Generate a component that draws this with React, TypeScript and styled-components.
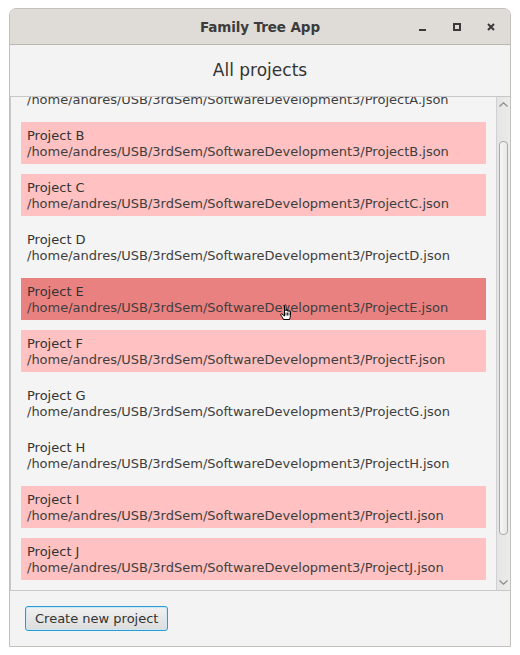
import { useEffect, useRef } from 'react';
import styled, { createGlobalStyle } from 'styled-components';

interface IProject {
  name: string;
  path: string;
  state: 'plain' | 'marked' | 'hover';
}

const base = '/home/andres/USB/3rdSem/SoftwareDevelopment3/';

const projects: IProject[] = [
  { name: 'Project A', path: base + 'ProjectA.json', state: 'plain' },
  { name: 'Project B', path: base + 'ProjectB.json', state: 'marked' },
  { name: 'Project C', path: base + 'ProjectC.json', state: 'marked' },
  { name: 'Project D', path: base + 'ProjectD.json', state: 'plain' },
  { name: 'Project E', path: base + 'ProjectE.json', state: 'hover' },
  { name: 'Project F', path: base + 'ProjectF.json', state: 'marked' },
  { name: 'Project G', path: base + 'ProjectG.json', state: 'plain' },
  { name: 'Project H', path: base + 'ProjectH.json', state: 'plain' },
  { name: 'Project I', path: base + 'ProjectI.json', state: 'marked' },
  { name: 'Project J', path: base + 'ProjectJ.json', state: 'marked' },
];

const App = () => {
  const viewRef = useRef<HTMLDivElement>(null);

  // list is scrolled all the way down
  useEffect(() => {
    if (viewRef.current) {
      viewRef.current.scrollTop = viewRef.current.scrollHeight;
    }
  }, []);

  return (
    <>
      <GlobalStyle />
      <Window>
        <TitleBar>
          <Title>Family Tree App</Title>
          <Controls>
            <Control aria-label='minimize'>
              <svg width='8' height='8' viewBox='0 0 8 8'>
                <rect x='0' y='6' width='7' height='2' fill='#3a3a3a' />
              </svg>
            </Control>
            <Control aria-label='maximize'>
              <svg width='8' height='8' viewBox='0 0 8 8'>
                <rect x='1' y='1' width='6' height='6' fill='none' stroke='#3a3a3a' strokeWidth='2' />
              </svg>
            </Control>
            <Control aria-label='close'>
              <svg width='8' height='8' viewBox='0 0 8 8'>
                <path d='M1 1 L7 7 M7 1 L1 7' stroke='#3a3a3a' strokeWidth='2' />
              </svg>
            </Control>
          </Controls>
        </TitleBar>

        <Content>
          <Heading>All projects</Heading>
          <ListFrame>
            <Viewport ref={viewRef}>
              {projects.map((p) => (
                <Item key={p.name} $state={p.state}>
                  <ItemName>{p.name}</ItemName>
                  <ItemPath>{p.path}</ItemPath>
                  {p.state === 'hover' && (
                    <Cursor width='14' height='17' viewBox='0 0 14 17'>
                      <path
                        d='M4.5 1.5 C4.5 0.7 6 0.7 6 1.5 V7 V6.2 C6 5.4 7.5 5.4 7.5 6.2 V7.2 V6.7 C7.5 5.9 9 5.9 9 6.7 V7.7 V7.4 C9 6.6 10.5 6.6 10.5 7.4 V11.5 C10.5 13 9.8 14.5 9.5 15.5 H3.5 C3 14 1.8 12.5 0.8 11 C0.3 10.2 1.2 9.3 2 10 L4.5 12 Z'
                        fill='#fff'
                        stroke='#000'
                        strokeWidth='1'
                        strokeLinejoin='round'
                      />
                      <path d='M6 8.5 V11.5 M7.5 8.5 V11.5 M9 8.5 V11.5' stroke='#000' strokeWidth='0.8' />
                    </Cursor>
                  )}
                </Item>
              ))}
            </Viewport>
            <ScrollBar>
              <Arrow viewBox='0 0 9 5' width='9' height='5'>
                <path d='M0.5 4.5 L4.5 0.8 L8.5 4.5' fill='none' stroke='#8a8a8a' strokeWidth='1.2' />
              </Arrow>
              <Track>
                <Thumb />
              </Track>
              <Arrow viewBox='0 0 9 5' width='9' height='5'>
                <path d='M0.5 0.5 L4.5 4.2 L8.5 0.5' fill='none' stroke='#8a8a8a' strokeWidth='1.2' />
              </Arrow>
            </ScrollBar>
          </ListFrame>
          <Footer>
            <Button type='button'>Create new project</Button>
          </Footer>
        </Content>
      </Window>
    </>
  );
};

export default App;

const GlobalStyle = createGlobalStyle`
  html, body {
    margin: 0;
    padding: 0;
    background: #ffffff;
  }
  body {
    font-family: 'DejaVu Sans', 'Liberation Sans', sans-serif;
    color: #333333;
  }
`;

const Window = styled.div`
  width: 502px;
  height: 639px;
  margin: 8px 0 0 9px;
  display: flex;
  flex-direction: column;
  border: 1px solid #c4c1bd;
  border-radius: 7px 7px 0 0;
  box-sizing: border-box;
  overflow: hidden;
  background: #f3f3f3;
`;

const TitleBar = styled.div`
  height: 36px;
  flex-shrink: 0;
  position: relative;
  display: flex;
  align-items: center;
  justify-content: center;
  background: #dfdbd6;
  border-bottom: 1px solid #bcb7b1;
  box-sizing: border-box;
`;

const Title = styled.div`
  font-family: 'DejaVu Sans', sans-serif;
  font-weight: bold;
  font-size: 13.5px;
  color: #3c3c3c;
  letter-spacing: -0.1px;
`;

const Controls = styled.div`
  position: absolute;
  right: 15px;
  top: 0;
  bottom: 0;
  display: flex;
  align-items: center;
  gap: 26px;
`;

const Control = styled.div`
  width: 8px;
  height: 8px;
  display: flex;
  svg {
    display: block;
  }
`;

const Content = styled.div`
  flex: 1;
  display: flex;
  flex-direction: column;
  min-height: 0;
`;

const Heading = styled.div`
  height: 51px;
  flex-shrink: 0;
  display: flex;
  align-items: center;
  justify-content: center;
  font-size: 17px;
  color: #333333;
  padding-bottom: 1px;
  box-sizing: border-box;
`;

const ListFrame = styled.div`
  height: 495px;
  flex-shrink: 0;
  display: flex;
  border-top: 1px solid #c8c8c8;
  border-bottom: 1px solid #c8c8c8;
  border-left: 1px solid #c8c8c8;
  box-sizing: border-box;
  background: #f4f4f4;
`;

const Viewport = styled.div`
  flex: 1;
  overflow: hidden;
  display: flex;
  flex-direction: column;
  gap: 10px;
  padding: 10px 10px 10px 10px;
`;

const Item = styled.div<{ $state: 'plain' | 'marked' | 'hover' }>`
  position: relative;
  flex-shrink: 0;
  height: 42px;
  padding: 6px 6px 4px;
  box-sizing: border-box;
  display: flex;
  flex-direction: column;
  justify-content: center;
  background: ${({ $state }) =>
    $state === 'marked' ? '#ffc1c1' : $state === 'hover' ? '#ea8181' : 'transparent'};
  font-size: 13px;
  line-height: 16px;
`;

const ItemName = styled.div`
  color: #333333;
  white-space: nowrap;
`;

const ItemPath = styled.div`
  color: #3e3e3e;
  white-space: nowrap;
`;

const Cursor = styled.svg`
  position: absolute;
  left: 259px;
  top: 26px;
`;

const ScrollBar = styled.div`
  width: 14px;
  flex-shrink: 0;
  display: flex;
  flex-direction: column;
  align-items: center;
  border-left: 1px solid #d0d0d0;
  background: linear-gradient(to right, #e4e4e4, #ececec);
  padding: 5px 0 5px;
  box-sizing: border-box;
`;

const Arrow = styled.svg`
  flex-shrink: 0;
  display: block;
`;

const Track = styled.div`
  flex: 1;
  width: 100%;
  display: flex;
  flex-direction: column;
  justify-content: flex-end;
  padding: 25px 2px 45px 2px;
  box-sizing: border-box;
`;

const Thumb = styled.div`
  height: 394px;
  border: 1px solid #a9a9a9;
  border-radius: 4px;
  background: linear-gradient(to right, #f6f6f6, #e8e8e8);
  box-sizing: border-box;
`;

const Footer = styled.div`
  flex: 1;
  display: flex;
  align-items: flex-start;
  padding: 15px 15px 0 15px;
`;

const Button = styled.button`
  height: 25px;
  padding: 0 9px;
  font-family: 'DejaVu Sans', sans-serif;
  font-size: 13px;
  color: #333333;
  border: 1px solid #2b9bd3;
  border-radius: 3px;
  box-shadow: inset 0 0 0 1px #cde7f5;
  background: linear-gradient(to bottom, #f1f1f1, #dcdcdc);
  cursor: pointer;
`;
